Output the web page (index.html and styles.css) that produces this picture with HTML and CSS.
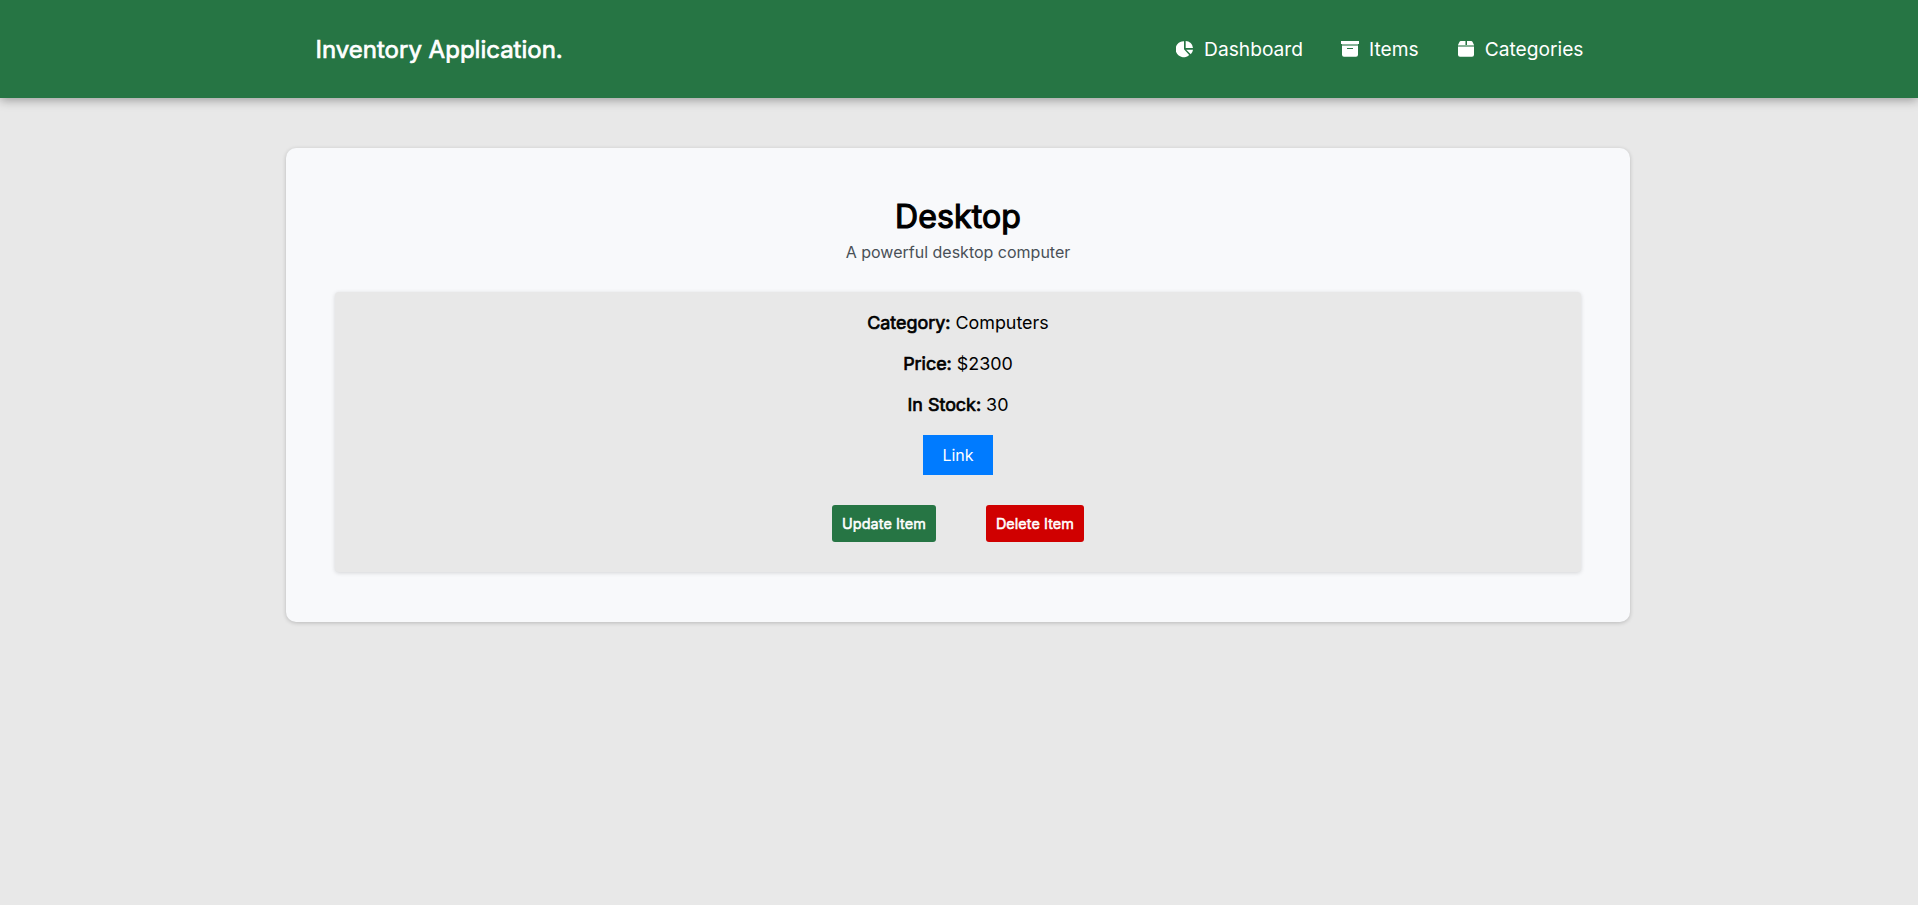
FILE: index.html
```html
<!DOCTYPE html>
<html lang="en">
<head>
<meta charset="utf-8">
<title>Inventory Application</title>
<link rel="stylesheet" href="styles.css">
</head>
<body>
<header class="header">
  <div class="header-inner">
    <div class="logo">Inventory Application.</div>
    <nav class="nav">
      <a class="nav-link"><svg class="icon" viewBox="0 0 18 18"><path d="M8 1.2V9.3L13.2 14.9A8 8 0 1 1 8 1.2Z"/><path d="M9.7 1A7.6 7.6 0 0 1 17 8H9.7Z"/><path d="M10.2 9.7H17A8 8 0 0 1 14.8 14.2Z"/></svg>Dashboard</a>
      <a class="nav-link"><svg class="icon" viewBox="0 0 18 18"><path d="M0 1H18V4H0Z"/><path class="faint" d="M1 4H17V6H1Z"/><path fill-rule="evenodd" d="M1 6H17V14.7Q17 16.7 15 16.7H3Q1 16.7 1 14.7ZM6 8V9H12V8Z"/></svg>Items</a>
      <a class="nav-link"><svg class="icon" viewBox="0 0 18 18"><path d="M4 1H8V5H1L2.3 2.2Q2.8 1 4 1ZM10 1H14Q15.2 1 15.7 2.2L17 5H10Z"/><path class="faint" d="M8 1H9V5H8ZM1 5H17V7H1Z"/><path d="M1 7H17V14.7Q17 16.7 15 16.7H3Q1 16.7 1 14.7Z"/></svg>Categories</a>
    </nav>
  </div>
</header>
<main class="main">
  <section class="card">
    <h1 class="title">Desktop</h1>
    <p class="description">A powerful desktop computer</p>
    <div class="details">
      <p class="detail"><span class="label">Category:</span> Computers</p>
      <p class="detail"><span class="label">Price:</span> $2300</p>
      <p class="detail"><span class="label">In Stock:</span> 30</p>
      <a class="link">Link</a>
      <div class="actions">
        <a class="button update">Update Item</a>
        <a class="button delete">Delete Item</a>
      </div>
    </div>
  </section>
</main>
</body>
</html>
```
FILE: styles.css
```css
* {
  box-sizing: border-box;
  margin: 0;
  padding: 0;
}

body {
  min-height: 100vh;
  background: #e8e8e8;
  color: #000;
  font-family: Inter, sans-serif;
  font-size: 16px;
}

.header {
  height: 98px;
  padding-right: 19px;
  background: #267544;
  color: #fff;
  box-shadow: 0 2px 10px rgba(0, 0, 0, 0.35);
}

.header-inner {
  display: flex;
  align-items: center;
  justify-content: space-between;
  width: 1268px;
  height: 100%;
  margin: 0 auto;
}

.logo {
  font-size: 24px;
  -webkit-text-stroke: 0.7px currentColor;
}

.nav {
  display: flex;
  gap: 38px;
}

.nav-link {
  display: flex;
  align-items: center;
  gap: 10px;
  font-size: 19.2px;
}

.icon {
  width: 18px;
  height: 18px;
  fill: currentColor;
}

.faint {
  opacity: 0.45;
}

.main {
  padding: 50px 2px 0 0;
}

.card {
  display: flex;
  flex-direction: column;
  align-items: center;
  width: 1344px;
  height: 474px;
  margin: 0 auto;
  padding: 50px 49px;
  border-radius: 10px;
  background: #f8f9fb;
  box-shadow: 0 1px 4px rgba(0, 0, 0, 0.2);
}

.title {
  font-size: 32px;
  font-weight: 400;
  line-height: 38px;
  letter-spacing: 0.1px;
  -webkit-text-stroke: 1.2px currentColor;
}

.description {
  margin-top: 6px;
  color: #495057;
  line-height: 20px;
}

.details {
  display: flex;
  flex-direction: column;
  align-items: center;
  width: 1246px;
  height: 280px;
  margin-top: 30px;
  padding-top: 20px;
  border-radius: 4px;
  background: #e8e8e8;
  box-shadow: 0 1px 4px rgba(0, 0, 0, 0.15);
}

.detail {
  margin-bottom: 19px;
  font-size: 17.9px;
  line-height: 22px;
}

.label {
  -webkit-text-stroke: 0.7px currentColor;
}

.link {
  width: 70px;
  padding: 10px 0;
  background: #007bff;
  color: #fff;
  line-height: 20px;
  text-align: center;
}

.actions {
  display: flex;
  gap: 50px;
  margin-top: 30px;
}

.button {
  padding: 10px;
  border-radius: 3px;
  color: #fff;
  font-size: 14.4px;
  line-height: 17px;
  letter-spacing: 0.07px;
  -webkit-text-stroke: 0.5px currentColor;
}

.update {
  background: #267544;
}

.delete {
  background: #d00000;
}
```
